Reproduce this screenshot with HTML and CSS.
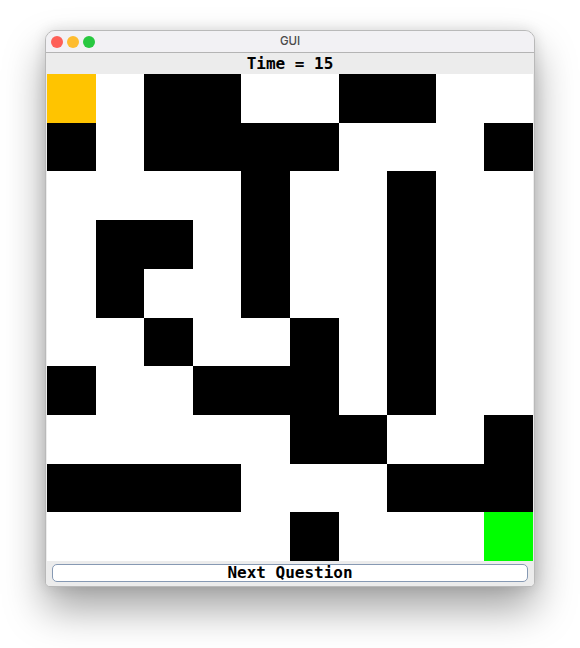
FILE: index.html
```html
<!DOCTYPE html>
<html>
<head>
<meta charset="utf-8">
<title>GUI</title>
<link rel="stylesheet" href="styles.css">
</head>
<body>
<div class="window">
  <div class="titlebar">
    <div class="lights">
      <span class="light red"></span>
      <span class="light yellow"></span>
      <span class="light green"></span>
    </div>
    <div class="title">GUI</div>
  </div>
  <div class="content">
    <div class="label">Time = 15</div>
    <div class="maze">
      <div class="start"></div><div></div><div class="wall"></div><div class="wall"></div><div></div><div></div><div class="wall"></div><div class="wall"></div><div></div><div></div>
      <div class="wall"></div><div></div><div class="wall"></div><div class="wall"></div><div class="wall"></div><div class="wall"></div><div></div><div></div><div></div><div class="wall"></div>
      <div></div><div></div><div></div><div></div><div class="wall"></div><div></div><div></div><div class="wall"></div><div></div><div></div>
      <div></div><div class="wall"></div><div class="wall"></div><div></div><div class="wall"></div><div></div><div></div><div class="wall"></div><div></div><div></div>
      <div></div><div class="wall"></div><div></div><div></div><div class="wall"></div><div></div><div></div><div class="wall"></div><div></div><div></div>
      <div></div><div></div><div class="wall"></div><div></div><div></div><div class="wall"></div><div></div><div class="wall"></div><div></div><div></div>
      <div class="wall"></div><div></div><div></div><div class="wall"></div><div class="wall"></div><div class="wall"></div><div></div><div class="wall"></div><div></div><div></div>
      <div></div><div></div><div></div><div></div><div></div><div class="wall"></div><div class="wall"></div><div></div><div></div><div class="wall"></div>
      <div class="wall"></div><div class="wall"></div><div class="wall"></div><div class="wall"></div><div></div><div></div><div></div><div class="wall"></div><div class="wall"></div><div class="wall"></div>
      <div></div><div></div><div></div><div></div><div></div><div class="wall"></div><div></div><div></div><div></div><div class="goal"></div>
    </div>
    <div class="actions">
      <button class="next">Next Question</button>
    </div>
  </div>
</div>
</body>
</html>
```

FILE: styles.css
```css
html, body {
  margin: 0;
  padding: 0;
  background: #ffffff;
}

body {
  box-sizing: border-box;
  min-height: 648px;
  padding: 30px 0 0 45px;
}

.window {
  width: 488px;
  border: 1px solid #b9b9b9;
  border-radius: 10px 10px 5px 5px;
  background: #ececec;
  box-shadow: 0 22px 40px rgba(0, 0, 0, 0.36), 0 0 14px rgba(0, 0, 0, 0.12);
  overflow: hidden;
}

.titlebar {
  position: relative;
  height: 21px;
  background: #f2f1f4;
  border-bottom: 1px solid #b4b4b4;
  display: flex;
  align-items: center;
  justify-content: center;
}

.lights {
  position: absolute;
  left: 5px;
  top: 5px;
  display: flex;
  gap: 4px;
}

.light {
  width: 12px;
  height: 12px;
  border-radius: 50%;
  display: block;
}

.red { background: #fe5f57; }
.yellow { background: #febc2e; }
.green { background: #28c840; }

.title {
  font-family: Inter, "Liberation Sans", sans-serif;
  font-size: 11.5px;
  font-weight: 500;
  color: #4b4b4b;
  line-height: 21px;
}

.content {
  padding: 0 1px 4px 1px;
  background: #ececec;
}

.label {
  height: 21px;
  line-height: 22px;
  text-align: center;
  font-family: "DejaVu Sans Mono", "Liberation Mono", monospace;
  font-weight: bold;
  font-size: 16px;
  color: #000;
}

.maze {
  width: 486px;
  height: 487px;
  display: grid;
  grid-template-columns: repeat(10, 1fr);
  grid-template-rows: repeat(10, 1fr);
  background: #ffffff;
}

.wall { background: #000000; }
.start { background: #ffc400; }
.goal { background: #00ff00; }

.actions {
  display: flex;
  padding: 3px 5px 0 5px;
}

.next {
  flex: 1;
  height: 18px;
  margin: 0;
  padding: 0;
  background: #ffffff;
  border: 1px solid #8699b3;
  border-radius: 5px;
  font-family: "DejaVu Sans Mono", "Liberation Mono", monospace;
  font-weight: bold;
  font-size: 16px;
  line-height: 16px;
  color: #000;
}
```
